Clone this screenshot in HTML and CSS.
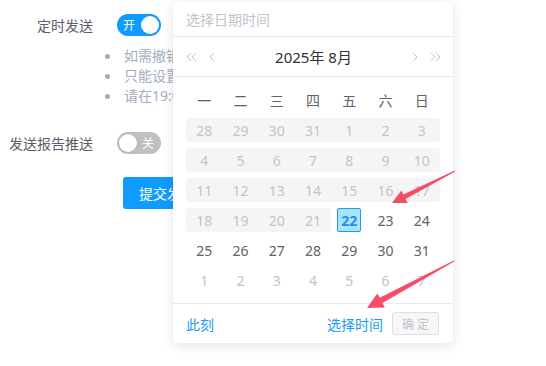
FILE: index.html
```html
<!DOCTYPE html>
<html lang="zh-CN">
<head>
    <meta charset="UTF-8">
    <title>定时发送</title>
    <link rel="stylesheet" href="styles.css">
</head>
<body>
    <div class="form">
        <div class="form-row">
            <label class="form-label">定时发送</label>
            <span class="switch is-on"><span class="switch-text">开</span><span class="knob"></span></span>
        </div>
        <ul class="tips">
            <li>如需撤销定时发送，请在发送时间前关闭</li>
            <li>只能设置当前时间之后的时间</li>
            <li>请在19:00前完成设置</li>
        </ul>
        <div class="form-row row-push">
            <label class="form-label">发送报告推送</label>
            <span class="switch"><span class="knob"></span><span class="switch-text">关</span></span>
        </div>
        <button class="btn-submit">提交发送</button>
    </div>

    <!-- date picker dropdown -->
    <div class="picker">
        <div class="picker-input">选择日期时间</div>
        <div class="picker-head">
            <div class="nav">
                <svg width="11" height="10" viewBox="0 0 11 10"><path d="M5 1 L1 5 L5 9 M10 1 L6 5 L10 9"/></svg>
                <svg width="6" height="10" viewBox="0 0 6 10"><path d="M5 1 L1 5 L5 9"/></svg>
            </div>
            <div class="title">2025年 8月</div>
            <div class="nav">
                <svg width="6" height="10" viewBox="0 0 6 10"><path d="M1 1 L5 5 L1 9"/></svg>
                <svg width="11" height="10" viewBox="0 0 11 10"><path d="M1 1 L5 5 L1 9 M6 1 L10 5 L6 9"/></svg>
            </div>
        </div>
        <div class="picker-body">
            <div class="week">
                <span>一</span><span>二</span><span>三</span><span>四</span><span>五</span><span>六</span><span>日</span>
            </div>
            <div class="days row-off">
                <span>28</span><span>29</span><span>30</span><span>31</span><span>1</span><span>2</span><span>3</span>
            </div>
            <div class="days row-off">
                <span>4</span><span>5</span><span>6</span><span>7</span><span>8</span><span>9</span><span>10</span>
            </div>
            <div class="days row-off">
                <span>11</span><span>12</span><span>13</span><span>14</span><span>15</span><span>16</span><span>17</span>
            </div>
            <div class="days">
                <span class="off first">18</span><span class="off">19</span><span class="off">20</span><span class="off last">21</span>
                <span><b class="today">22</b></span><span>23</span><span>24</span>
            </div>
            <div class="days">
                <span>25</span><span>26</span><span>27</span><span>28</span><span>29</span><span>30</span><span>31</span>
            </div>
            <div class="days next">
                <span>1</span><span>2</span><span>3</span><span>4</span><span>5</span><span>6</span><span>7</span>
            </div>
        </div>
        <div class="picker-foot">
            <a class="link">此刻</a>
            <div class="foot-right">
                <a class="link">选择时间</a>
                <button class="btn-ok">确 定</button>
            </div>
        </div>
    </div>

    <svg class="arrows" width="546" height="366" viewBox="0 0 546 366">
        <polygon points="454.8,170.6 403.4,194.5 401.3,190.5 392,203 407.7,202.9 405.6,198.9 455.2,171.4"/>
        <polygon points="453.8,260.6 379.7,297.8 377.3,293.4 367,308 384.9,307.4 382.5,303 454.2,261.4"/>
    </svg>
</body>
</html>
```

FILE: styles.css
```css
body {
    margin: 0;
    font-family: "Noto Sans", "Noto Sans CJK SC", sans-serif;
    font-size: 14px;
    color: #606266;
    background: #fff;
}
.form { padding-top: 14px; }
.form-row { display: flex; align-items: center; height: 22px; }
.form-label {
    width: 93px;
    margin-right: 24px;
    text-align: right;
    color: #5a5e6a;
}
.row-push { margin-top: 26px; }

.switch {
    display: flex;
    align-items: center;
    justify-content: space-between;
    box-sizing: border-box;
    width: 44px;
    height: 22px;
    padding: 0 2px 0 6px;
    border-radius: 11px;
    background: #c0c0c0;
    color: #fff;
    font-size: 12px;
}
.switch.is-on { background: #109cff; }
.switch:not(.is-on) { padding: 0 7px 0 2px; }
.knob {
    width: 18px;
    height: 18px;
    border-radius: 50%;
    background: #fff;
}
.switch:not(.is-on) .knob { box-shadow: 0 0 0 1px #b5b5b5; }

/* the dropdown hides the rest of these lines */
.tips {
    list-style: none;
    width: 68px;
    overflow: hidden;
    margin: 10px 0 0 105px;
    padding: 0;
    color: #a3acc1;
    white-space: nowrap;
}
.tips li { display: flex; align-items: center; line-height: 20px; }
.tips li::before {
    content: "";
    flex: none;
    width: 5px;
    height: 5px;
    margin-right: 14px;
    border-radius: 50%;
    background: #a3acc1;
}

.btn-submit {
    margin: 23px 0 0 123px;
    height: 32px;
    padding: 0 16px;
    border: none;
    border-radius: 3px;
    background: #109cff;
    color: #fff;
    font-family: inherit;
    font-size: 14px;
}

.picker {
    position: absolute;
    left: 173px;
    top: 2px;
    width: 280px;
    height: 341px;
    background: #fff;
    border-radius: 4px;
    box-shadow: 0 2px 12px rgba(0, 0, 0, 0.12);
}
.picker-input {
    display: flex;
    align-items: center;
    height: 34px;
    padding: 0 13px;
    color: #c0c4cc;
    border-bottom: 1px solid #e4e7ed;
}
.picker-head {
    display: flex;
    align-items: center;
    justify-content: space-between;
    height: 39px;
    padding: 0 12px 0 13px;
    border-bottom: 1px solid #e4e7ed;
}
.nav { display: flex; align-items: center; gap: 12px; width: 40px; }
.nav:last-child { justify-content: flex-end; }
.nav svg path { fill: none; stroke: #bfc4cc; stroke-width: 1; }
.title { font-size: 15px; color: #303133; }

.picker-body { padding: 11px 13px; }
.week, .days {
    display: grid;
    grid-template-columns: repeat(7, 1fr);
    height: 24px;
    align-items: center;
    text-align: center;
}
.week { margin-bottom: 6px; color: #606266; }
.days { margin-bottom: 6px; }
.days:last-child { margin-bottom: 0; }
.days span { display: flex; align-items: center; justify-content: center; height: 24px; }
.row-off { background: #f5f5f5; border-radius: 4px; color: #c0c4cc; }
.off { background: #f5f5f5; color: #c0c4cc; }
.off.first { border-radius: 4px 0 0 4px; }
.off.last { border-radius: 0 4px 4px 0; }
.next { color: #c0c4cc; }
.today {
    display: flex;
    align-items: center;
    justify-content: center;
    box-sizing: border-box;
    width: 24px;
    height: 24px;
    border: 1px solid #1a9cf5;
    border-radius: 2px;
    background: #a8e2fb;
    color: #1a8ff0;
    font-weight: bold;
}

.picker-foot {
    display: flex;
    align-items: center;
    justify-content: space-between;
    height: 39px;
    padding: 0 14px 0 13px;
    border-top: 1px solid #e4e7ed;
}
.link { color: #1a9cf0; }
.foot-right { display: flex; align-items: center; gap: 9px; }
.btn-ok {
    width: 47px;
    height: 23px;
    padding: 0;
    border: 1px solid #dcdfe6;
    border-radius: 3px;
    background: #f7f7f7;
    color: #c0c4cc;
    font-family: inherit;
    font-size: 12px;
}

.arrows { position: absolute; left: 0; top: 0; pointer-events: none; }
.arrows polygon { fill: #f64c66; }
```
